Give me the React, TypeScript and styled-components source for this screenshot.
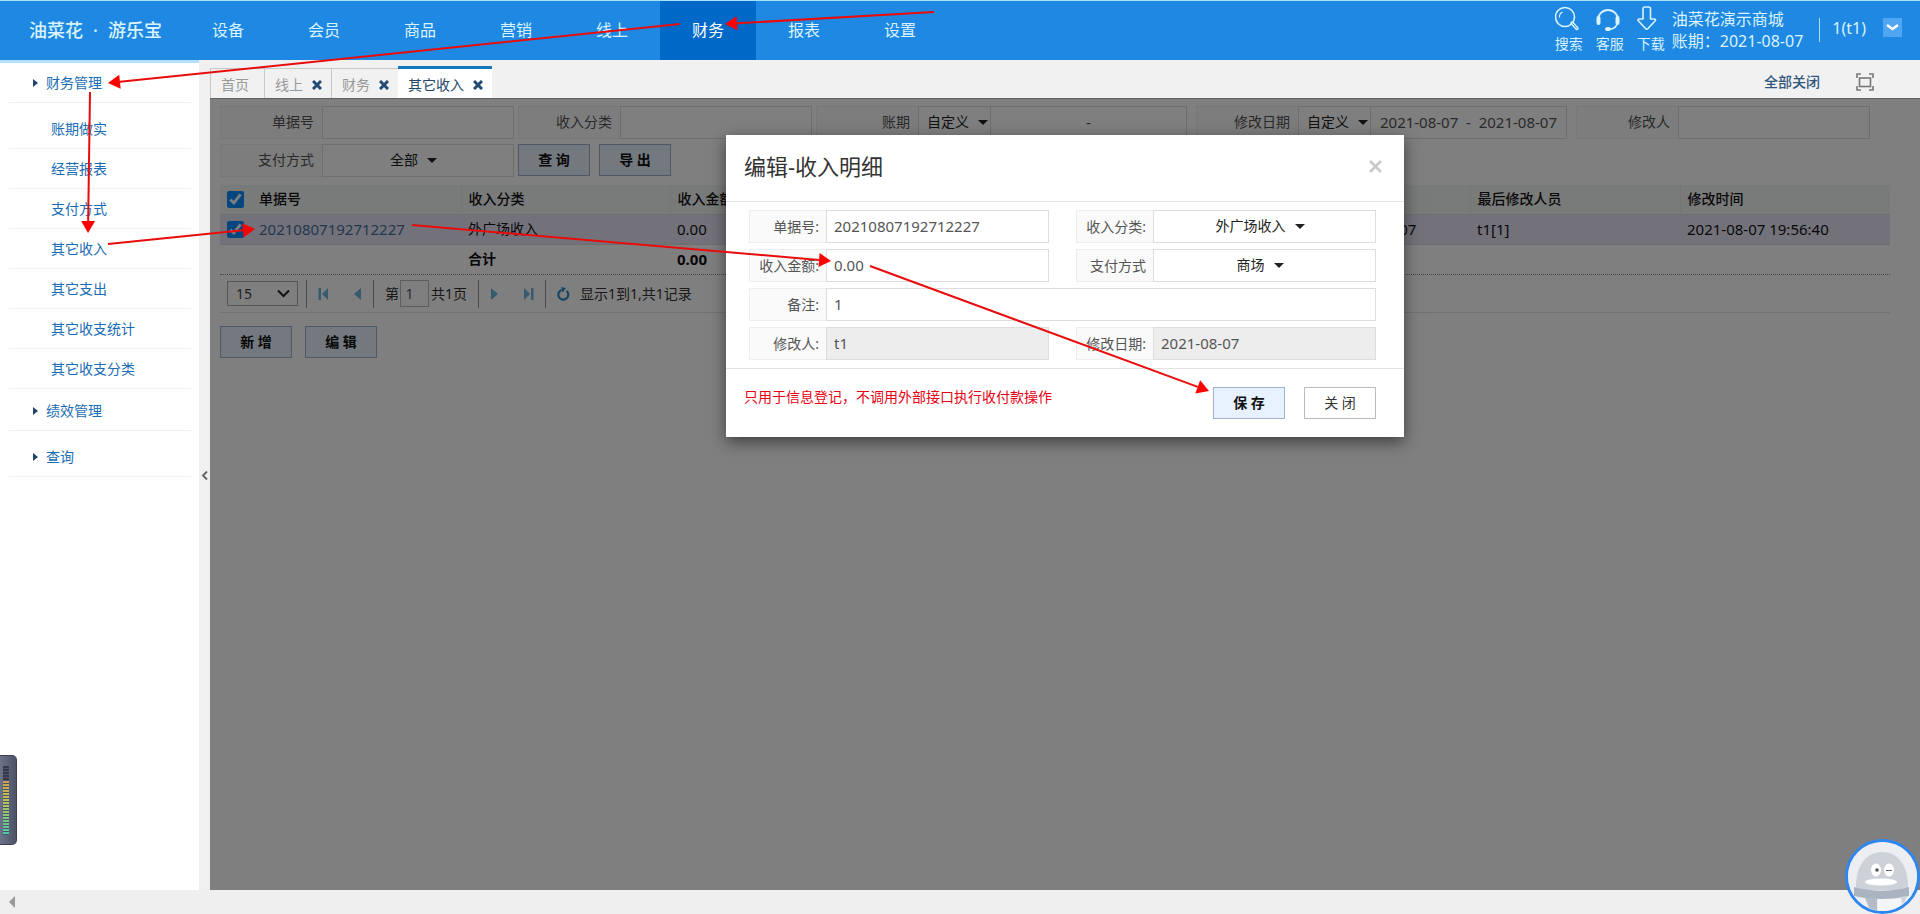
import React, { useId } from 'react';
import styled, { createGlobalStyle } from 'styled-components';

const GlobalStyle = createGlobalStyle`
  *, *::before, *::after { box-sizing: border-box; }
  html, body { margin: 0; padding: 0; }
  body, button, input, select {
    font-family: 'Noto Sans', 'Noto Sans CJK SC', sans-serif;
    font-size: 14px;
  }
  body { line-height: 20px; color: #333; background: #fff; }
  a { text-decoration: none; }
`;

const Page = styled.div`
  position: relative;
  display: flex;
  flex-direction: column;
  min-height: 100vh;
  overflow: hidden;
`;

/* ---------- header ---------- */

const Header = styled.header`
  display: flex;
  align-items: stretch;
  height: 60px;
  padding-right: 18px;
  background: #1e88e2;
  border-top: 1px solid #a8e2fa;
  color: #d9f3ff;
`;

const Logo = styled.div`
  display: flex;
  align-items: center;
  justify-content: space-between;
  width: 180px;
  padding: 0 18px 2px 29px;
  font-size: 18px;
  font-weight: 500;
  color: #d9f3ff;
`;

const Nav = styled.nav`
  display: flex;
`;

const NavLink = styled.a<{ $active?: boolean }>`
  display: flex;
  align-items: center;
  justify-content: center;
  width: 96px;
  padding-bottom: 2px;
  font-size: 16px;
  color: ${(p) => (p.$active ? '#fff' : '#d9f3ff')};
  background: ${(p) => (p.$active ? '#0069c8' : 'transparent')};
`;

const HeaderTools = styled.div`
  display: flex;
  align-items: flex-start;
  margin-left: auto;
`;

const Tool = styled.a`
  display: flex;
  flex-direction: column;
  align-items: flex-start;
  gap: 2px;
  width: 41px;
  padding: 4px 0 0 6px;
  color: #d9f3ff;
`;

const Mall = styled.div`
  padding: 7px 16px 0 0;
  font-size: 16px;
  line-height: 22px;
  white-space: nowrap;
`;

const User = styled.div`
  display: flex;
  align-items: flex-start;
  gap: 17px;
  height: 24px;
  margin-top: 17px;
  padding-left: 12px;
  border-left: 1px solid #a8e2fa;
  font-size: 16px;
`;

const UserMenu = styled.button`
  display: flex;
  align-items: center;
  justify-content: center;
  width: 19px;
  height: 19px;
  padding: 0;
  border: 0;
  background: #50a6f0;
  color: #fff;
`;

/* ---------- sidebar ---------- */

const Body = styled.div`
  display: flex;
  flex: 1;
`;

const Sidebar = styled.aside`
  flex: none;
  width: 199px;
  border-top: 3px solid #b5e2fb;
  padding: 0 8px 0 9px;
`;

const Group = styled.a<{ $spaced?: boolean }>`
  display: flex;
  align-items: center;
  gap: 8px;
  height: 40px;
  margin-top: ${(p) => (p.$spaced ? '6px' : '0')};
  padding-left: 24px;
  border-bottom: 1px solid #f0f0f0;
  color: #1a6cb4;

  &::before {
    content: '';
    border: 4px solid transparent;
    border-left: 5px solid #1f4468;
    border-right: 0;
  }
`;

const SubList = styled.ul`
  margin: 6px 0 2px;
  padding: 0;
  list-style: none;
`;

const SubLink = styled.a`
  display: flex;
  align-items: center;
  height: 40px;
  padding-left: 42px;
  border-bottom: 1px solid #f0f0f0;
  color: #1a6cb4;
`;

const Splitter = styled.div`
  display: flex;
  align-items: center;
  justify-content: center;
  flex: none;
  width: 11px;
  background: #f0f0f0;
`;

/* ---------- tabs ---------- */

const Main = styled.main`
  display: flex;
  flex: 1;
  flex-direction: column;
  min-width: 0;
`;

const TabBar = styled.div`
  display: flex;
  align-items: flex-end;
  height: 38px;
  padding-right: 46px;
  background: #f1f1f1;
`;

const Tab = styled.div<{ $active?: boolean; $fixed?: boolean }>`
  display: flex;
  align-items: center;
  gap: 9px;
  height: ${(p) => (p.$active ? '32px' : '30px')};
  padding: 3px ${(p) => (p.$fixed ? '15px' : '9px')} 0 10px;
  border: solid #c8c8c8;
  border-width: 1px 0 0 1px;
  color: #999;
  ${(p) =>
    p.$active &&
    `border-width: 3px 0 0; border-color: #1478bd; background: #fff; color: #24476b;`}
`;

const TabClose = styled.button`
  display: flex;
  padding: 0;
  border: 0;
  background: none;
  color: #244c73;
`;

const TabTools = styled.div`
  display: flex;
  align-items: center;
  gap: 36px;
  height: 32px;
  margin-left: auto;
`;

const CloseAll = styled.a`
  color: #31557d;
  font-weight: 500;
`;

const IconButton = styled.button`
  display: flex;
  padding: 0;
  border: 0;
  background: none;
  color: #777;
`;

/* ---------- content ---------- */

const Panel = styled.section`
  position: relative;
  flex: 1;
  padding: 7px 10px 0;
  border-top: 1px solid #c0c0c0;
`;

const Filters = styled.form`
  display: flex;
  flex-wrap: wrap;
  gap: 5px 4px;
`;

const Field = styled.div<{ $wide?: boolean }>`
  display: flex;
  width: ${(p) => (p.$wide ? '371px' : '294px')};
  height: 33px;
  margin-right: ${(p) => (p.$wide ? '5px' : '0')};
`;

const FieldLabel = styled.label`
  display: flex;
  align-items: center;
  justify-content: flex-end;
  flex: none;
  width: 102px;
  padding: 0 8px 2px 0;
  border: 1px solid #eee;
  border-right: 0;
  background: #fafafa;
  color: #555;
  white-space: nowrap;
`;

const TextInput = styled.input<{ $center?: boolean }>`
  flex: 1;
  min-width: 0;
  padding: 0 7px 2px;
  border: 1px solid #ddd;
  border-radius: 0;
  background: #fff;
  color: #555;
  font-size: 15px;
  text-align: ${(p) => (p.$center ? 'center' : 'left')};

  &:disabled { background: #ededed; color: #555; }
`;

const SelectBox = styled.div<{ $narrow?: boolean }>`
  display: flex;
  align-items: center;
  justify-content: ${(p) => (p.$narrow ? 'flex-start' : 'center')};
  gap: 9px;
  flex: ${(p) => (p.$narrow ? '0 0 72px' : '1')};
  padding: ${(p) => (p.$narrow ? '0 0 0 8px' : '0 9px 0 0')};
  border: 1px solid #ddd;
  border-right-width: ${(p) => (p.$narrow ? '0' : '1px')};
  background: #fff;

  &::after {
    content: '';
    border: 5px solid transparent;
    border-top-color: #222;
    border-bottom: 0;
  }
`;

const Select = styled.select`
  appearance: none;
  padding: 0 0 2px;
  border: 0;
  background: none;
  color: #222;
`;

const ButtonRow = styled.div<{ $gap: number }>`
  display: flex;
  gap: ${(p) => p.$gap}px;
`;

const Button = styled.button<{ $plain?: boolean }>`
  width: 72px;
  height: 32px;
  padding: 0 0 2px;
  border: 1px solid ${(p) => (p.$plain ? '#bbb' : '#9fb3cc')};
  background: ${(p) => (p.$plain ? '#fff' : '#e8f1ff')};
  color: ${(p) => (p.$plain ? '#333' : '#111')};
  font-weight: ${(p) => (p.$plain ? '400' : '700')};
  white-space: pre;
`;

const Grid = styled.div`
  margin: 8px 20px 13px 0;
  border-bottom: 1px solid #e4e4e4;
`;

const Table = styled.table`
  width: 100%;
  border-collapse: collapse;
  table-layout: fixed;
`;

const HeadCell = styled.th`
  height: 29px;
  padding: 0 7px;
  background: #f3f4f5;
  border-left: 1px solid #ebebeb;
  color: #111;
  font-weight: 500;
  text-align: left;
  &:first-child, &:nth-child(2) { border-left: 0; }
`;

const Cell = styled.td<{ $selected?: boolean }>`
  height: 30px;
  padding: 0 7px;
  background: ${(p) => (p.$selected ? '#e6e4f6' : '#fff')};
  border-top: 1px solid #ddd;
  color: #111;
  white-space: nowrap;
`;

const Num = styled.span`
  font-size: 15px;
`;

const RecordLink = styled.a`
  color: #466f9c;
  font-size: 15px;
`;

const TotalCell = styled(Cell)`
  font-weight: 700;
`;

const Check = styled.input`
  display: block;
  width: 17px;
  height: 17px;
  margin: 0;
  accent-color: #0a8cff;
`;

const Pager = styled.div`
  display: flex;
  align-items: center;
  height: 38px;
  padding-left: 7px;
  border-top: 1px dotted #888;
`;

const PageSize = styled.div`
  position: relative;
  display: flex;
  width: 71px;
  height: 25px;
  margin-right: 8px;
`;

const PageSizeSelect = styled.select`
  appearance: none;
  width: 100%;
  padding: 0 8px;
  border: 1px solid #aaa;
  background: #fff;
  color: #444;
`;

const SizeArrow = styled.svg`
  position: absolute;
  right: 8px;
  top: 8px;
  pointer-events: none;
`;

const PagerGroup = styled.div<{ $width?: number }>`
  display: flex;
  align-items: center;
  justify-content: space-between;
  width: ${(p) => (p.$width ? `${p.$width}px` : 'auto')};
  height: 28px;
  padding: 0 11px;
  border-left: 1px solid #999;
  color: #333;
  white-space: nowrap;
`;

const PagerButton = styled.button`
  display: flex;
  padding: 0;
  border: 0;
  background: none;
  color: #6cb4dd;
`;

const PagerStatus = styled.span`
  padding-left: 10px;
`;

const PageInput = styled.input`
  width: 29px;
  height: 27px;
  padding: 0 4px;
  border: 1px solid #bbb;
  color: #555;
`;

const Shade = styled.div`
  position: absolute;
  inset: -1px 0 0;
  display: flex;
  align-items: flex-start;
  justify-content: center;
  padding-top: 37px;
  background: rgba(0, 0, 0, 0.5);
`;

/* ---------- dialog ---------- */

const Dialog = styled.div`
  width: 678px;
  background: #fff;
  box-shadow: 0 5px 15px rgba(0, 0, 0, 0.5);
`;

const DialogHead = styled.div`
  display: flex;
  align-items: center;
  justify-content: space-between;
  height: 67px;
  padding: 0 22px 4px 18px;
  border-bottom: 1px solid #e2e2e2;
`;

const DialogTitle = styled.h2`
  margin: 0;
  font-size: 22px;
  font-weight: 400;
  line-height: 30px;
  color: #333;
`;

const DialogForm = styled.form`
  display: grid;
  grid-template-columns: 300px 300px;
  column-gap: 27px;
  row-gap: 6px;
  padding: 8px 23px;
  border-bottom: 1px solid #e2e2e2;
`;

const DialogField = styled.div<{ $full?: boolean }>`
  display: flex;
  height: 33px;
  grid-column: ${(p) => (p.$full ? '1 / -1' : 'auto')};

  ${FieldLabel} {
    width: 77px;
    padding: 0 7px 0 0;
  }
`;

const DialogFoot = styled.div`
  display: flex;
  justify-content: space-between;
  padding: 18px 28px 18px 18px;
`;

const Notice = styled.p`
  margin: 0;
  color: #e60012;
`;

/* ---------- page furniture ---------- */

const ScrollTrack = styled.div`
  display: flex;
  align-items: center;
  height: 24px;
  padding-left: 9px;
  background: #efefef;

  &::before {
    content: '';
    border: 6px solid transparent;
    border-right-color: #999;
    border-left: 0;
  }
`;

const Meter = styled.div`
  position: absolute;
  left: 0;
  bottom: 69px;
  width: 17px;
  height: 90px;
  padding: 10px 0 0 3px;
  border: 1px solid #3c4254;
  border-left: 0;
  border-radius: 0 5px 5px 0;
  background: linear-gradient(90deg, #6c7388, #4d5366);
`;

const MeterScale = styled.div`
  width: 6px;
  height: 69px;
  background:
    repeating-linear-gradient(180deg, transparent 0 2px, #4d5366 2px 3px),
    linear-gradient(180deg, #353b4c 0 15px, #cf9f50 15px, #bfc257 50%, #49c8ae);
`;

const Avatar = styled.button`
  position: absolute;
  right: 0;
  bottom: 0;
  width: 75px;
  height: 75px;
  padding: 0;
  border: 3px solid #2f86ee;
  border-radius: 50%;
  overflow: hidden;
  background: #f0f1f3;
`;

const Annotations = styled.svg`
  position: absolute;
  top: 0;
  left: 0;
  pointer-events: none;
`;

/* ---------- icons ---------- */

const CrossIcon = () => (
  <svg width="10" height="10" viewBox="0 0 10 10" stroke="currentColor" strokeWidth="3" fill="none">
    <path d="M1 1 9 9M9 1 1 9" />
  </svg>
);

const DialogCrossIcon = () => (
  <svg width="13" height="13" viewBox="0 0 13 13" fill="none" stroke="#c8c8c8" strokeWidth="2.5">
    <path d="M1 1l11 11M12 1 1 12" />
  </svg>
);

const SearchIcon = () => (
  <svg width="26" height="27" viewBox="2 0 26 27" fill="none" stroke="currentColor">
    <circle cx="12" cy="12" r="9.5" strokeWidth="1.6" />
    <path d="M6.5 12.5a5.5 5.5 0 0 1 3-5.5" strokeWidth="1.2" />
    <path d="m19 18 5 5.5" strokeWidth="3.4" strokeLinecap="round" />
    <path d="m19.5 18.5 4.5 5" stroke="#1e88e2" strokeWidth="1" />
  </svg>
);

const SupportIcon = () => (
  <svg width="26" height="27" viewBox="1 0 26 27" fill="none" stroke="currentColor">
    <path d="M3 15a10 10 0 1 1 20 0" strokeWidth="1.8" />
    <path d="M3.5 13v5M22.500 13v5" strokeWidth="4" strokeLinecap="round" />
    <path d="M22 19c-1 3-4 5-7 5" strokeWidth="1.5" />
    <ellipse cx="13" cy="24" rx="3" ry="2" fill="currentColor" stroke="none" />
  </svg>
);

const DownloadIcon = () => (
  <svg width="26" height="27" viewBox="3 0 26 27" fill="none" stroke="currentColor" strokeWidth="1.6" strokeLinejoin="round">
    <path d="M9 4c0-1 .5-2 2-2h3.5c1.5 0 2 1 2 2v10h3.5c1.5 0 2 1 1 2l-7 7.5c-.8.8-1.7.8-2.5 0L4.500 16c-1-1-.5-2 1-2H9z" />
  </svg>
);

const FullscreenIcon = () => (
  <svg width="18" height="18" viewBox="0 0 18 18" fill="none" stroke="currentColor" strokeWidth="1.6">
    <path d="M1 5V1h4M13 1h4v4M17 13v4h-4M5 17H1v-4" />
    <rect x="3.5" y="5" width="11" height="8.5" />
  </svg>
);

const StepIcon = ({ back, bar }: { back?: boolean; bar?: boolean }) => (
  <svg width="10" height="12" viewBox="0 0 10 12" fill="currentColor">
    <g transform={back ? 'rotate(180 5 6)' : undefined}>
      <path d={bar ? 'M0 0 6 6 0 12z' : 'M1 0 8 6 1 12z'} />
      {bar && <rect x="7" y="0" width="2.5" height="12" />}
    </g>
  </svg>
);

const RefreshIcon = () => (
  <svg width="13" height="14" viewBox="0 0 13 14" fill="none" stroke="#2b8fcb" strokeWidth="2.2">
    <path d="M9.500 3.800a5 5 0 1 1-5-.8" />
    <path d="M4 0 9 1 5.500 5.500z" fill="#2b8fcb" stroke="none" />
  </svg>
);

const RobotIcon = () => (
  <svg width="69" height="69" viewBox="0 0 69 69">
    <circle cx="34.5" cy="34.5" r="34.5" fill="#eceef1" />
    <path d="M8 48C7 24 18 10 34 10s27 14 26 38z" fill="#cdd2d9" />
    <path d="M6 45c18 5 38 5 55 0v9c-18 4-38 4-55 0z" fill="#aab4c0" />
    <path d="M17 56h12v12H22z" fill="#b3bbc6" />
    <path d="M30 57h23v12H30z" fill="#f4f5f7" />
    <path d="M53 55l6-1-4 10z" fill="#cfd5dd" />
    <ellipse cx="28" cy="28" rx="5" ry="6.5" fill="#fff" />
    <ellipse cx="41" cy="28" rx="5" ry="6.5" fill="#fff" />
    <circle cx="29" cy="28" r="1.8" fill="#555" />
    <path d="M38 28.5h6" stroke="#666" strokeWidth="1.2" />
    <ellipse cx="33" cy="40" rx="16" ry="3.5" fill="#fff" />
  </svg>
);

const HEAD_LENGTH = 12;
const HEAD_HALF_WIDTH = 7;

const Arrow = ({ from, to }: { from: [number, number]; to: [number, number] }) => {
  const dx = to[0] - from[0];
  const dy = to[1] - from[1];
  const len = Math.hypot(dx, dy);
  const ux = dx / len;
  const uy = dy / len;
  const bx = to[0] - ux * HEAD_LENGTH;
  const by = to[1] - uy * HEAD_LENGTH;
  const left = `${bx - uy * HEAD_HALF_WIDTH},${by + ux * HEAD_HALF_WIDTH}`;
  const right = `${bx + uy * HEAD_HALF_WIDTH},${by - ux * HEAD_HALF_WIDTH}`;
  return (
    <g>
      <line x1={from[0]} y1={from[1]} x2={bx} y2={by} stroke="#e80c0c" strokeWidth="2" />
      <polygon points={`${to[0]},${to[1]} ${left} ${right}`} fill="#ff0000" />
    </g>
  );
};

/* ---------- composed controls ---------- */

type TextFieldProps = { label: string; value?: string; disabled?: boolean };

const FilterText = ({ label, value = '' }: TextFieldProps) => {
  const id = useId();
  return (
    <Field>
      <FieldLabel htmlFor={id}>{label}</FieldLabel>
      <TextInput id={id} defaultValue={value} />
    </Field>
  );
};

const FilterRange = ({ label, value }: { label: string; value: string }) => {
  const id = useId();
  return (
    <Field $wide>
      <FieldLabel htmlFor={id}>{label}</FieldLabel>
      <SelectBox $narrow>
        <Select id={id}>
          <option>自定义</option>
        </Select>
      </SelectBox>
      <TextInput $center aria-label={label} defaultValue={value} />
    </Field>
  );
};

const DialogText = ({ label, value, disabled, full }: TextFieldProps & { full?: boolean }) => {
  const id = useId();
  return (
    <DialogField $full={full}>
      <FieldLabel htmlFor={id}>{label}</FieldLabel>
      <TextInput id={id} defaultValue={value} disabled={disabled} />
    </DialogField>
  );
};

const DialogSelect = ({ label, value }: { label: string; value: string }) => {
  const id = useId();
  return (
    <DialogField>
      <FieldLabel htmlFor={id}>{label}</FieldLabel>
      <SelectBox>
        <Select id={id}>
          <option>{value}</option>
        </Select>
      </SelectBox>
    </DialogField>
  );
};

const navItems = ['设备', '会员', '商品', '营销', '线上', '财务', '报表', '设置'];
const subItems = ['账期做实', '经营报表', '支付方式', '其它收入', '其它支出', '其它收支统计', '其它收支分类'];
const tabs = ['线上', '财务', '其它收入'];

export default function App() {
  const typeId = useId();
  return (
    <Page>
      <GlobalStyle />
      <Header>
        <Logo>
          <span>油菜花</span>
          <span>·</span>
          <span>游乐宝</span>
        </Logo>
        <Nav>
          {navItems.map((item) => (
            <NavLink key={item} href="#" $active={item === '财务'}>
              {item}
            </NavLink>
          ))}
        </Nav>
        <HeaderTools>
          <Tool href="#"><SearchIcon />搜索</Tool>
          <Tool href="#"><SupportIcon />客服</Tool>
          <Tool href="#"><DownloadIcon />下载</Tool>
          <Mall>
            <div>油菜花演示商城</div>
            <div>账期：2021-08-07</div>
          </Mall>
          <User>
            1(t1)
            <UserMenu aria-label="用户菜单">
              <svg width="13" height="9" viewBox="0 0 13 9" fill="none" stroke="currentColor" strokeWidth="2.5">
                <path d="M1 2l5.5 4L12 2" />
              </svg>
            </UserMenu>
          </User>
        </HeaderTools>
      </Header>

      <Body>
        <Sidebar>
          <Group href="#">财务管理</Group>
          <SubList>
            {subItems.map((item) => (
              <li key={item}>
                <SubLink href="#">{item}</SubLink>
              </li>
            ))}
          </SubList>
          <Group href="#">绩效管理</Group>
          <Group href="#" $spaced>查询</Group>
        </Sidebar>
        <Splitter>
          <svg width="7" height="9" viewBox="0 0 7 9" fill="none" stroke="#666" strokeWidth="2">
            <path d="M6 0.5 2 4.5 6 8.5" />
          </svg>
        </Splitter>

        <Main>
          <TabBar>
            <Tab $fixed>首页</Tab>
            {tabs.map((tab) => (
              <Tab key={tab} $active={tab === '其它收入'}>
                {tab}
                <TabClose aria-label={`关闭${tab}`}>
                  <CrossIcon />
                </TabClose>
              </Tab>
            ))}
            <TabTools>
              <CloseAll href="#">全部关闭</CloseAll>
              <IconButton aria-label="全屏"><FullscreenIcon /></IconButton>
            </TabTools>
          </TabBar>

          <Panel>
            <Filters>
              <FilterText label="单据号" />
              <FilterText label="收入分类" />
              <FilterRange label="账期" value="-" />
              <FilterRange label="修改日期" value={'2021-08-07\u00a0\u00a0-\u00a0\u00a02021-08-07'} />
              <FilterText label="修改人" />
              <Field>
                <FieldLabel htmlFor={typeId}>支付方式</FieldLabel>
                <SelectBox>
                  <Select id={typeId}>
                    <option>全部</option>
                  </Select>
                </SelectBox>
              </Field>
              <ButtonRow $gap={9}>
                <Button type="button">查 询</Button>
                <Button type="button">导 出</Button>
              </ButtonRow>
            </Filters>

            <Grid>
              <Table>
                <colgroup>
                  <col width="32" />
                  <col width="209" />
                  <col width="209" />
                  <col width="209" />
                  <col width="209" />
                  <col />
                  <col width="139" />
                  <col width="210" />
                  <col width="210" />
                </colgroup>
                <thead>
                  <tr>
                    <HeadCell><Check type="checkbox" defaultChecked aria-label="全选" /></HeadCell>
                    <HeadCell>单据号</HeadCell>
                    <HeadCell>收入分类</HeadCell>
                    <HeadCell>收入金额</HeadCell>
                    <HeadCell />
                    <HeadCell />
                    <HeadCell />
                    <HeadCell>最后修改人员</HeadCell>
                    <HeadCell>修改时间</HeadCell>
                  </tr>
                </thead>
                <tbody>
                  <tr>
                    <Cell $selected><Check type="checkbox" defaultChecked aria-label="选择记录" /></Cell>
                    <Cell $selected><RecordLink href="#">20210807192712227</RecordLink></Cell>
                    <Cell $selected>外广场收入</Cell>
                    <Cell $selected><Num>0.00</Num></Cell>
                    <Cell $selected />
                    <Cell $selected />
                    <Cell $selected><Num>2021-08-07</Num></Cell>
                    <Cell $selected><Num>t1[1]</Num></Cell>
                    <Cell $selected><Num>2021-08-07 19:56:40</Num></Cell>
                  </tr>
                  <tr>
                    <TotalCell colSpan={2} />
                    <TotalCell>合计</TotalCell>
                    <TotalCell><Num>0.00</Num></TotalCell>
                    <TotalCell colSpan={5} />
                  </tr>
                </tbody>
              </Table>
              <Pager>
                <PageSize>
                  <PageSizeSelect aria-label="每页条数">
                    <option>15</option>
                  </PageSizeSelect>
                  <SizeArrow width="13" height="9" viewBox="0 0 13 9" fill="none" stroke="#222" strokeWidth="2">
                    <path d="M1 1.500l5.500 5.500L12 1.500" />
                  </SizeArrow>
                </PageSize>
                <PagerGroup $width={67}>
                  <PagerButton aria-label="首页"><StepIcon back bar /></PagerButton>
                  <PagerButton aria-label="上一页"><StepIcon back /></PagerButton>
                </PagerGroup>
                <PagerGroup $width={105}>
                  第
                  <PageInput aria-label="页码" defaultValue="1" />
                  共1页
                </PagerGroup>
                <PagerGroup $width={67}>
                  <PagerButton aria-label="下一页"><StepIcon /></PagerButton>
                  <PagerButton aria-label="末页"><StepIcon bar /></PagerButton>
                </PagerGroup>
                <PagerGroup>
                  <PagerButton aria-label="刷新"><RefreshIcon /></PagerButton>
                  <PagerStatus>显示1到1,共1记录</PagerStatus>
                </PagerGroup>
              </Pager>
            </Grid>

            <ButtonRow $gap={13}>
              <Button type="button">新 增</Button>
              <Button type="button">编 辑</Button>
            </ButtonRow>

            <Shade>
              <Dialog role="dialog" aria-label="编辑-收入明细">
                <DialogHead>
                  <DialogTitle>编辑-收入明细</DialogTitle>
                  <IconButton aria-label="关闭对话框"><DialogCrossIcon /></IconButton>
                </DialogHead>
                <DialogForm>
                  <DialogText label="单据号:" value="20210807192712227" />
                  <DialogSelect label="收入分类:" value="外广场收入" />
                  <DialogText label="收入金额:" value="0.00" />
                  <DialogSelect label="支付方式" value="商场" />
                  <DialogText label="备注:" value="1" full />
                  <DialogText label="修改人:" value="t1" disabled />
                  <DialogText label="修改日期:" value="2021-08-07" disabled />
                </DialogForm>
                <DialogFoot>
                  <Notice>只用于信息登记，不调用外部接口执行收付款操作</Notice>
                  <ButtonRow $gap={19}>
                    <Button type="button">保 存</Button>
                    <Button type="button" $plain>关 闭</Button>
                  </ButtonRow>
                </DialogFoot>
              </Dialog>
            </Shade>
          </Panel>
        </Main>
      </Body>

      <ScrollTrack />
      <Meter><MeterScale /></Meter>
      <Avatar aria-label="智能客服"><RobotIcon /></Avatar>

      <Annotations width="1920" height="914" viewBox="0 0 1920 914" aria-hidden="true">
        <Arrow from={[934, 12]} to={[725, 24]} />
        <Arrow from={[680, 24]} to={[108, 83]} />
        <Arrow from={[90, 92]} to={[88, 233]} />
        <Arrow from={[108, 244]} to={[255, 229]} />
        <Arrow from={[412, 225]} to={[831, 261]} />
        <Arrow from={[870, 266]} to={[1209, 391]} />
      </Annotations>
    </Page>
  );
}
